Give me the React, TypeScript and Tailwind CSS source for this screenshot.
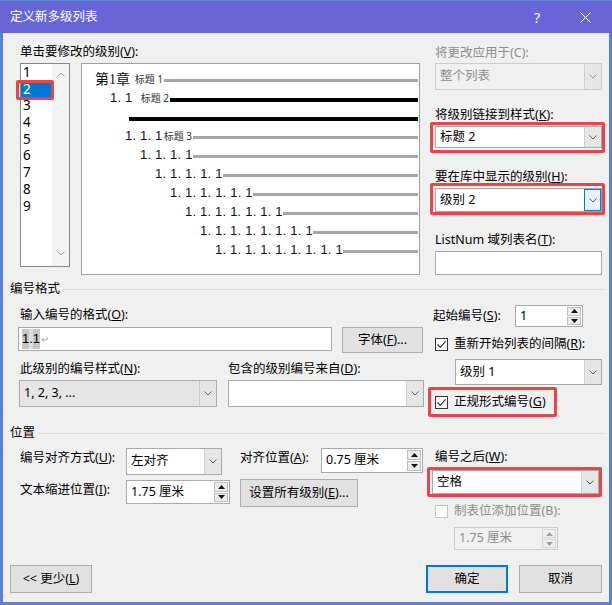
import React from "react";

const Chev = ({ c = "#606060" }: { c?: string }) => (
  <svg width="8" height="5" viewBox="0 0 8 5">
    <polyline points="0.5,0.5 4,4 7.5,0.5" fill="none" stroke={c} strokeWidth="1" />
  </svg>
);

const Tri = ({ up, c = "#000" }: { up?: boolean; c?: string }) => (
  <svg width="7" height="4" viewBox="0 0 7 4">
    <polygon points={up ? "0,4 7,4 3.5,0" : "0,0 7,0 3.5,4"} fill={c} />
  </svg>
);

function Combo({
  cls,
  text,
  kind = "white",
}: {
  cls: string;
  text?: React.ReactNode;
  kind?: "white" | "gray" | "disabled" | "focus";
}) {
  const box =
    kind === "gray"
      ? "border-[#adadad] bg-[#e5e5e5]"
      : kind === "disabled"
      ? "border-[#cccccc] bg-[#f0f0f0] text-[#8d8d8d]"
      : "border-[#a9a9a9] bg-white";
  const arrow =
    kind === "focus"
      ? "bg-[#e5f1fb] border border-[#0078d7]"
      : kind === "gray"
      ? "bg-[#e5e5e5] border-l border-[#c8c8c8]"
      : kind === "disabled"
      ? "bg-[#e6e6e6] border-l border-[#cccccc]"
      : "bg-[#e6e6e6] border-l border-[#d0d0d0]";
  return (
    <div className={`flex border ${box} ${cls}`}>
      <div className="flex-1 flex items-center pl-[4px] whitespace-nowrap overflow-hidden">{text}</div>
      <div className={`w-[17px] flex items-center justify-center ${arrow}`}>
        <Chev c={kind === "disabled" ? "#9a9a9a" : "#606060"} />
      </div>
    </div>
  );
}

function Spin({ cls, text, disabled }: { cls: string; text: string; disabled?: boolean }) {
  return (
    <div
      className={`flex border ${
        disabled ? "border-[#cccccc] bg-[#f0f0f0] text-[#8d8d8d]" : "border-[#a9a9a9] bg-white"
      } ${cls}`}
    >
      <div className="flex-1 flex items-center pl-[4px] whitespace-nowrap">{text}</div>
      <div className="w-[16px] flex flex-col gap-[1px] p-[1px]">
        <div
          className={`flex-1 flex items-center justify-center border ${
            disabled ? "border-[#d6d6d6] bg-[#f0f0f0]" : "border-[#bdbdbd] bg-[#ececec]"
          }`}
        >
          <Tri up c={disabled ? "#a0a0a0" : "#111"} />
        </div>
        <div
          className={`flex-1 flex items-center justify-center border ${
            disabled ? "border-[#d6d6d6] bg-[#f0f0f0]" : "border-[#bdbdbd] bg-[#ececec]"
          }`}
        >
          <Tri c={disabled ? "#a0a0a0" : "#111"} />
        </div>
      </div>
    </div>
  );
}

function Check({ checked, disabled }: { checked?: boolean; disabled?: boolean }) {
  return (
    <div
      className={`w-[13px] h-[13px] shrink-0 border ${
        disabled ? "border-[#c4c4c4]" : "border-[#333333]"
      } bg-white flex items-center justify-center`}
    >
      {checked && (
        <svg width="11" height="11" viewBox="0 0 11 11">
          <polyline points="1.5,5.5 4.3,8.3 9.5,2.3" fill="none" stroke="#222" strokeWidth="1.1" />
        </svg>
      )}
    </div>
  );
}

function Btn({ cls, children, primary }: { cls: string; children: React.ReactNode; primary?: boolean }) {
  return (
    <div
      className={`flex items-center justify-center bg-[#e1e1e1] ${
        primary ? "border-2 border-[#0078d7]" : "border border-[#adadad]"
      } ${cls}`}
    >
      {children}
    </div>
  );
}

const L = ({ children, cls = "" }: { children: React.ReactNode; cls?: string }) => (
  <div className={`h-[16px] leading-[16px] whitespace-nowrap ${cls}`}>{children}</div>
);

const Gray = () => <div className="flex-1 h-[3px] bg-[#a6a6a6] mt-[4px]" />;
const Black = () => <div className="flex-1 h-[4px] bg-black mt-[4px]" />;

const num = "font-['Liberation_Sans',sans-serif] text-[13px] tracking-[0.2px] whitespace-nowrap text-[#111]";
const small = "text-[10px] leading-[12px] text-[#333] whitespace-nowrap pr-[1px]";

export default function App() {
  return (
    <div className="w-[612px] h-[605px] flex flex-col bg-[#5b80d8] font-['Noto_Sans','Noto_Sans_CJK_SC',sans-serif] text-[12.5px] text-black overflow-hidden">
      {/* Title bar */}
      <div className="h-[33px] bg-[#6866d6] border-t border-[#5b88d8] flex items-center pl-[10px] text-white">
        <div className="text-[12.5px]">定义新多级列表</div>
        <div className="ml-auto w-[20px] text-center text-[14px]">?</div>
        <div className="ml-[28px] w-[20px] flex items-center justify-center mr-[17px]">
          <svg width="11" height="11" viewBox="0 0 11 11">
            <line x1="0.5" y1="0.5" x2="10.5" y2="10.5" stroke="white" strokeWidth="1" />
            <line x1="10.5" y1="0.5" x2="0.5" y2="10.5" stroke="white" strokeWidth="1" />
          </svg>
        </div>
      </div>

      {/* Body */}
      <div className="flex-1 mx-[3px] mb-[3px] bg-[#f0f0f0] px-[7px] pt-[11px] flex flex-col">
        {/* Top section */}
        <div className="flex">
          <div className="ml-[10px] w-[400px] flex flex-col">
            <L>
              单击要修改的级别(<u>V</u>):
            </L>
            <div className="mt-[3px] flex">
              {/* level list */}
              <div className="relative w-[50px] h-[204px] border border-[#828790] bg-white flex">
                <div className="flex-1 flex flex-col text-[13.5px] font-['Noto_Sans',sans-serif]">
                  {["1", "2", "3", "4", "5", "6", "7", "8", "9"].map((n) => (
                    <div
                      key={n}
                      className={`h-[16.7px] leading-[16.7px] pl-[2px] ${
                        n === "2" ? "bg-[#0078d7] text-white" : ""
                      }`}
                    >
                      {n}
                    </div>
                  ))}
                </div>
                <div className="w-[17px] bg-[#f3f3f3] flex flex-col items-center justify-between pt-[8px] pb-[10px]">
                  <svg width="8" height="5" viewBox="0 0 8 5">
                    <polyline points="0.5,4.5 4,1 7.5,4.5" fill="none" stroke="#a8a8a8" strokeWidth="1" />
                  </svg>
                  <Chev c="#a8a8a8" />
                </div>
                <div className="absolute left-[-5px] top-[16px] w-[38px] h-[20px] border-[3px] border-[#e8454b] rounded-[2px]" />
              </div>
              {/* preview */}
              <div className="ml-[11px] w-[339px] h-[212px] border border-[#a0a0a0] bg-white pt-[5px] pr-[1px] flex flex-col">
                <div className="h-[19px] flex items-center pl-[13px]">
                  <div className="w-[69px] flex items-center justify-between">
                    <span className="whitespace-nowrap text-[14px] text-[#111]">
                      第<span className="font-['Liberation_Serif',serif]">1</span>章
                    </span>
                    <span className={small}>标题 1</span>
                  </div>
                  <Gray />
                </div>
                <div className="h-[19px] flex items-center pl-[28px]">
                  <div className="w-[60px] flex items-center justify-between">
                    <span className={num}>1. 1</span>
                    <span className={small}>标题 2</span>
                  </div>
                  <Black />
                </div>
                <div className="h-[19px] flex items-center pl-[47px]">
                  <Black />
                </div>
                <div className="h-[19px] flex items-center pl-[43px]">
                  <div className="w-[68px] flex items-center justify-between">
                    <span className={num}>1. 1. 1</span>
                    <span className={small}>标题 3</span>
                  </div>
                  <Gray />
                </div>
                <div className="h-[19px] flex items-center pl-[58px]">
                  <div className="w-[53px] flex items-center">
                    <span className={num}>1. 1. 1. 1</span>
                  </div>
                  <Gray />
                </div>
                <div className="h-[19px] flex items-center pl-[73px]">
                  <div className="w-[68px] flex items-center">
                    <span className={num}>1. 1. 1. 1. 1</span>
                  </div>
                  <Gray />
                </div>
                <div className="h-[19px] flex items-center pl-[88px]">
                  <div className="w-[83px] flex items-center">
                    <span className={num}>1. 1. 1. 1. 1. 1</span>
                  </div>
                  <Gray />
                </div>
                <div className="h-[19px] flex items-center pl-[103px]">
                  <div className="w-[98px] flex items-center">
                    <span className={num}>1. 1. 1. 1. 1. 1. 1</span>
                  </div>
                  <Gray />
                </div>
                <div className="h-[19px] flex items-center pl-[118px]">
                  <div className="w-[113px] flex items-center">
                    <span className={num}>1. 1. 1. 1. 1. 1. 1. 1</span>
                  </div>
                  <Gray />
                </div>
                <div className="h-[19px] flex items-center pl-[133px]">
                  <div className="w-[128px] flex items-center">
                    <span className={num}>1. 1. 1. 1. 1. 1. 1. 1. 1</span>
                  </div>
                  <Gray />
                </div>
              </div>
            </div>
          </div>

          {/* right column */}
          <div className="ml-[15px] w-[167px] flex flex-col">
            <L cls="mt-[1px] text-[#8d8d8d]">将更改应用于(C):</L>
            <Combo cls="mt-[2px] h-[27px] w-full" text="整个列表" kind="disabled" />
            <div className="mt-[18px] h-[14px] leading-[14px] whitespace-nowrap">
              将级别链接到样式(<u>K</u>):
            </div>
            <div className="ml-[-5px] mr-[-3px] border-[3px] border-[#e8454b] rounded-[2px] pl-[2px] pt-[1px] pb-[2px]">
              <Combo cls="h-[22px] w-[167px]" text="标题 2" />
            </div>
            <div className="mt-[17px] h-[14px] leading-[14px] whitespace-nowrap">
              要在库中显示的级别(<u>H</u>):
            </div>
            <div className="mt-[-1px] ml-[-5px] mr-[-3px] border-[3px] border-[#e8454b] rounded-[2px] pl-[2px] pt-[2px]">
              <Combo cls="h-[24px] w-[167px]" text="级别 2" kind="focus" />
            </div>
            <div className="mt-[18px] h-[14px] leading-[14px] whitespace-nowrap">
              ListNum 域列表名(<u>T</u>):
            </div>
            <div className="mt-[4px] h-[24px] w-full border border-[#a9a9a9] bg-white" />
          </div>
        </div>

        {/* Section B header */}
        <div className="mt-[6px] h-[16px] flex items-center">
          <span className="whitespace-nowrap">编号格式</span>
          <div className="flex-1 h-px bg-[#dcdcdc] ml-[3px] mr-[-3px]" />
        </div>
        <div className="flex">
          <div className="ml-[8px] w-[406px] flex flex-col">
            <L cls="ml-[2px] mt-[10px]">
              输入编号的格式(<u>O</u>):
            </L>
            <div className="mt-[4px] flex items-start">
              <div className="w-[314px] h-[24px] border border-[#a9a9a9] bg-white flex items-center pl-[3px] font-['Liberation_Sans',sans-serif] text-[13px]">
                <span className="bg-[#c6c6c6]">1</span>
                <span className="bg-[#dedede]">.</span>
                <span className="bg-[#c6c6c6]">1</span>
                <span className="text-[#a8a8a8] text-[10px] ml-[1px]">↵</span>
              </div>
              <Btn cls="ml-[10px] w-[81px] h-[26px]">
                字体(<u>F</u>)...
              </Btn>
            </div>
            <div className="mt-[8px] flex">
              <L cls="ml-[2px] w-[208px]">
                此级别的编号样式(<u>N</u>):
              </L>
              <L>
                包含的级别编号来自(<u>D</u>):
              </L>
            </div>
            <div className="mt-[3px] flex">
              <Combo cls="ml-[1px] w-[198px] h-[27px]" text="1, 2, 3, ..." kind="gray" />
              <Combo cls="ml-[11px] w-[196px] h-[27px]" />
            </div>
          </div>
          <div className="ml-[9px] w-[169px] flex flex-col">
            <div className="mt-[8px] h-[22px] flex items-center">
              <div className="w-[82px] whitespace-nowrap">
                起始编号(<u>S</u>):
              </div>
              <Spin cls="w-[68px] h-[22px]" text="1" />
            </div>
            <div className="mt-[9px] h-[16px] flex items-center ml-[2px]">
              <Check checked />
              <span className="ml-[6px] whitespace-nowrap">
                重新开始列表的间隔(<u>R</u>):
              </span>
            </div>
            <Combo cls="mt-[7px] ml-[22px] w-[147px] h-[26px]" text="级别 1" />
            <div className="mt-[2px] ml-[-5px] w-[129px] h-[30px] border-[3px] border-[#e8454b] rounded-[2px] flex items-center pl-[4px]">
              <Check checked />
              <span className="ml-[6px] whitespace-nowrap">
                正规形式编号(<u>G</u>)
              </span>
            </div>
          </div>
        </div>

        {/* Section C header */}
        <div className="mt-[8px] h-[16px] flex items-center">
          <span className="whitespace-nowrap">位置</span>
          <div className="flex-1 h-px bg-[#dcdcdc] ml-[4px] mr-[-3px]" />
        </div>
        <div className="flex">
          <div className="ml-[10px] w-[403px] flex flex-col">
            <div className="mt-[7px] flex items-start">
              <L cls="w-[106px] mt-[2px]">
                编号对齐方式(<u>U</u>):
              </L>
              <Combo cls="w-[96px] h-[27px]" text="左对齐" />
              <L cls="ml-[18px] w-[81px] mt-[2px]">
                对齐位置(<u>A</u>):
              </L>
              <Spin cls="w-[102px] h-[25px]" text="0.75 厘米" />
            </div>
            <div className="mt-[4px] flex items-start">
              <L cls="w-[106px] mt-[3px]">
                文本缩进位置(<u>I</u>):
              </L>
              <Spin cls="mt-[1px] w-[104px] h-[24px]" text="1.75 厘米" />
              <Btn cls="ml-[10px] w-[118px] h-[28px]">
                设置所有级别(<u>E</u>)...
              </Btn>
            </div>
          </div>
          <div className="ml-[4px] w-[175px] flex flex-col">
            <L cls="mt-[8px] ml-[8px]">
              编号之后(<u>W</u>):
            </L>
            <div className="mt-[2px] w-[175px] h-[30px] border-[3px] border-[#e8454b] rounded-[2px] pl-[2px]">
              <Combo cls="w-[167px] h-[24px]" text="空格" />
            </div>
            <div className="mt-[6px] ml-[8px] h-[16px] flex items-center">
              <Check disabled />
              <span className="ml-[6px] whitespace-nowrap text-[#8d8d8d]">制表位添加位置(B):</span>
            </div>
            <Spin cls="mt-[8px] ml-[27px] w-[104px] h-[23px]" text="1.75 厘米" disabled />
          </div>
        </div>

        {/* Bottom buttons */}
        <div className="mt-[15px] h-[28px] flex">
          <Btn cls="w-[82px] h-[28px]">
            &lt;&lt; 更少(<u>L</u>)
          </Btn>
          <Btn cls="ml-auto w-[82px] h-[28px]" primary>
            确定
          </Btn>
          <Btn cls="ml-[11px] w-[83px] h-[28px]">取消</Btn>
        </div>
      </div>
    </div>
  );
}
